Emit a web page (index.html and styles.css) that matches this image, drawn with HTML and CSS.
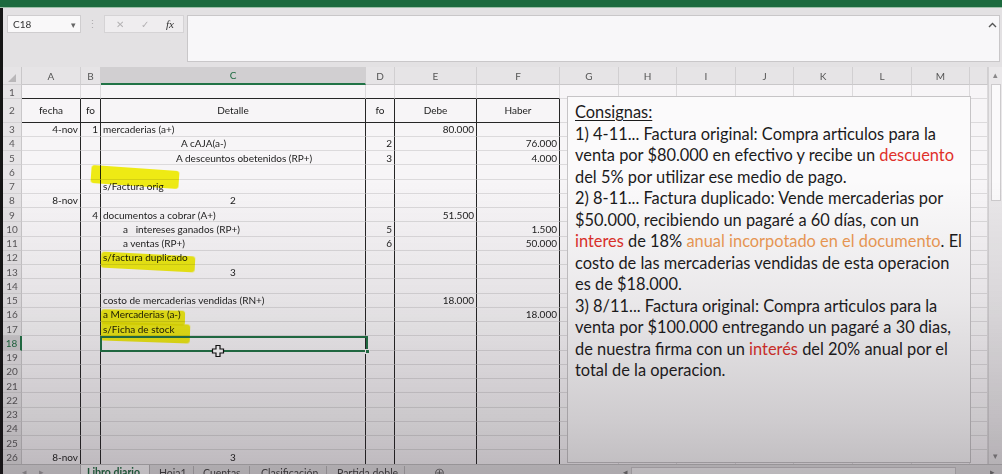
FILE: index.html
```html
<!DOCTYPE html>
<html lang="es">
<head>
<meta charset="utf-8">
<title>Libro diario</title>
<link rel="stylesheet" href="styles.css">
</head>
<body>
<div class="topbar"></div>
<div class="main">
  <div class="fbar">
    <div class="namebox"><span>C18</span><span class="dd">▾</span></div>
    <div class="grip">⋮</div>
    <div class="fbtns"><span class="x">✕</span><span class="ok">✓</span><span class="fx">fx</span></div>
    <div class="finput">
      <svg class="chev" width="9" height="6" viewBox="0 0 9 6"><path d="M1 5 L4.5 1.5 L8 5" fill="none" stroke="#555" stroke-width="1.4"/></svg>
    </div>
  </div>

  <div class="sheet">
    <div class="gridwrap">
      <div class="row hdr">
        <div class="corner"><svg width="8" height="8" viewBox="0 0 8 8"><path d="M8 0 L8 8 L0 8 Z" fill="#b9b7b9"/></svg></div>
        <div>A</div><div>B</div><div class="cur">C</div><div>D</div><div>E</div><div>F</div><div>G</div><div>H</div><div>I</div><div>J</div><div>K</div><div>L</div><div>M</div><div></div>
      </div>
      <div class="row r1"><div>1</div><div></div><div></div><div></div><div></div><div></div><div></div><div></div><div></div><div></div><div></div><div></div><div></div><div></div><div></div></div>
      <div class="row r2 t"><div>2</div><div class="ctr">fecha</div><div class="ctr">fo</div><div class="ctr">Detalle</div><div class="ctr">fo</div><div class="ctr">Debe</div><div class="ctr">Haber</div><div></div><div></div><div></div><div></div><div></div><div></div><div></div><div></div></div>
      <div class="row t"><div>3</div><div class="rt">4-nov</div><div class="rt">1</div><div>mercaderias (a+)</div><div></div><div class="rt">80.000</div><div></div><div></div><div></div><div></div><div></div><div></div><div></div><div></div><div></div></div>
      <div class="row t"><div>4</div><div></div><div></div><div class="in80">A cAJA(a-)</div><div class="rt">2</div><div></div><div class="rt">76.000</div><div></div><div></div><div></div><div></div><div></div><div></div><div></div><div></div></div>
      <div class="row t"><div>5</div><div></div><div></div><div class="in75">A desceuntos obetenidos (RP+)</div><div class="rt">3</div><div></div><div class="rt">4.000</div><div></div><div></div><div></div><div></div><div></div><div></div><div></div><div></div></div>
      <div class="row t"><div>6</div><div></div><div></div><div></div><div></div><div></div><div></div><div></div><div></div><div></div><div></div><div></div><div></div><div></div><div></div></div>
      <div class="row t"><div>7</div><div></div><div></div><div>s/Factura orig</div><div></div><div></div><div></div><div></div><div></div><div></div><div></div><div></div><div></div><div></div><div></div></div>
      <div class="row t"><div>8</div><div class="rt">8-nov</div><div></div><div class="ctr">2</div><div></div><div></div><div></div><div></div><div></div><div></div><div></div><div></div><div></div><div></div><div></div></div>
      <div class="row t"><div>9</div><div></div><div class="rt">4</div><div>documentos a cobrar (A+)</div><div></div><div class="rt">51.500</div><div></div><div></div><div></div><div></div><div></div><div></div><div></div><div></div><div></div></div>
      <div class="row t"><div>10</div><div></div><div></div><div class="in20">a   intereses ganados (RP+)</div><div class="rt">5</div><div></div><div class="rt">1.500</div><div></div><div></div><div></div><div></div><div></div><div></div><div></div><div></div></div>
      <div class="row t"><div>11</div><div></div><div></div><div class="in20">a ventas (RP+)</div><div class="rt">6</div><div></div><div class="rt">50.000</div><div></div><div></div><div></div><div></div><div></div><div></div><div></div><div></div></div>
      <div class="row t"><div>12</div><div></div><div></div><div>s/factura duplicado</div><div></div><div></div><div></div><div></div><div></div><div></div><div></div><div></div><div></div><div></div><div></div></div>
      <div class="row t"><div>13</div><div></div><div></div><div class="ctr">3</div><div></div><div></div><div></div><div></div><div></div><div></div><div></div><div></div><div></div><div></div><div></div></div>
      <div class="row t"><div>14</div><div></div><div></div><div></div><div></div><div></div><div></div><div></div><div></div><div></div><div></div><div></div><div></div><div></div><div></div></div>
      <div class="row t"><div>15</div><div></div><div></div><div>costo de mercaderias vendidas (RN+)</div><div></div><div class="rt">18.000</div><div></div><div></div><div></div><div></div><div></div><div></div><div></div><div></div><div></div></div>
      <div class="row t"><div>16</div><div></div><div></div><div>a Mercaderias (a-)</div><div></div><div></div><div class="rt">18.000</div><div></div><div></div><div></div><div></div><div></div><div></div><div></div><div></div></div>
      <div class="row t"><div>17</div><div></div><div></div><div>s/Ficha de stock</div><div></div><div></div><div></div><div></div><div></div><div></div><div></div><div></div><div></div><div></div><div></div></div>
      <div class="row t"><div class="cur">18</div><div></div><div></div><div></div><div></div><div></div><div></div><div></div><div></div><div></div><div></div><div></div><div></div><div></div><div></div></div>
      <div class="row t"><div>19</div><div></div><div></div><div></div><div></div><div></div><div></div><div></div><div></div><div></div><div></div><div></div><div></div><div></div><div></div></div>
      <div class="row t"><div>20</div><div></div><div></div><div></div><div></div><div></div><div></div><div></div><div></div><div></div><div></div><div></div><div></div><div></div><div></div></div>
      <div class="row t"><div>21</div><div></div><div></div><div></div><div></div><div></div><div></div><div></div><div></div><div></div><div></div><div></div><div></div><div></div><div></div></div>
      <div class="row t"><div>22</div><div></div><div></div><div></div><div></div><div></div><div></div><div></div><div></div><div></div><div></div><div></div><div></div><div></div><div></div></div>
      <div class="row t"><div>23</div><div></div><div></div><div></div><div></div><div></div><div></div><div></div><div></div><div></div><div></div><div></div><div></div><div></div><div></div></div>
      <div class="row t"><div>24</div><div></div><div></div><div></div><div></div><div></div><div></div><div></div><div></div><div></div><div></div><div></div><div></div><div></div><div></div></div>
      <div class="row t"><div>25</div><div></div><div></div><div></div><div></div><div></div><div></div><div></div><div></div><div></div><div></div><div></div><div></div><div></div><div></div></div>
      <div class="row t"><div>26</div><div class="rt">8-nov</div><div></div><div class="ctr">3</div><div></div><div></div><div></div><div></div><div></div><div></div><div></div><div></div><div></div><div></div><div></div></div>

      <div class="hl hl1"></div>
      <div class="hl hl2"></div>
      <div class="hl hl3a"></div>
      <div class="hl hl3b"></div>

      <div class="sel"><span class="handle"></span></div>
      <svg class="cursor" width="14" height="14" viewBox="0 0 14 14"><path d="M5 1.5h4v3.5h3.5v4h-3.5v3.5h-4v-3.5h-3.5v-4h3.5z" fill="#fff" stroke="#111" stroke-width="1.2"/></svg>

      <div class="textbox">
        <p class="title">Consignas:</p>
        <p>1) 4-11... Factura original: Compra articulos para la</p>
        <p>venta por $80.000 en efectivo y recibe un <span class="red">descuento</span></p>
        <p>del 5% por utilizar ese medio de pago.</p>
        <p>2) 8-11... Factura duplicado: Vende mercaderias por</p>
        <p>$50.000, recibiendo un pagaré a 60 días, con un</p>
        <p><span class="red">interes</span> de 18% <span class="orange">anual incorpotado en el documento</span>. El</p>
        <p>costo de las mercaderias vendidas de esta operacion</p>
        <p>es de $18.000.</p>
        <p>3) 8/11... Factura original: Compra articulos para la</p>
        <p>venta por $100.000 entregando un pagaré a 30 dias,</p>
        <p>de nuestra firma con un <span class="red">interés</span> del 20% anual por el</p>
        <p>total de la operacion.</p>
      </div>
    </div>
    <div class="vscroll">
      <span class="arr">▴</span>
      <div class="thumb"></div>
      <div class="track"></div>
      <span class="arr">▾</span>
    </div>
  </div>

  <div class="tabs">
    <div class="nav"><span>◂</span><span>▸</span></div>
    <div class="tab active">Libro diario</div>
    <div class="tab">Hoja1</div>
    <div class="tab">Cuentas</div>
    <div class="tab">Clasificación</div>
    <div class="tab">Partida doble</div>
    <div class="add">⊕</div>
    <div class="spacer"></div>
    <div class="hscroll">
      <span class="harr">◂</span>
      <div class="htrack"></div>
      <span class="harr">▸</span>
    </div>
  </div>
</div>
</body>
</html>
```
FILE: styles.css
```css
* { box-sizing: border-box; }

html, body { margin: 0; padding: 0; }

body {
  width: 1002px;
  height: 474px;
  overflow: hidden;
  position: relative;
  background: #e2e0e2;
  font-family: "Lato", "Open Sans", sans-serif;
  color: #1b1b1b;
}

body::after {
  content: "";
  position: absolute;
  inset: 0;
  pointer-events: none;
  background: linear-gradient(to bottom,
    rgba(30, 20, 30, 0) 0px,
    rgba(30, 20, 30, 0) 180px,
    rgba(30, 20, 30, 0.08) 300px,
    rgba(30, 20, 30, 0.2) 420px,
    rgba(30, 20, 30, 0.27) 474px);
}

.topbar {
  height: 8px;
  background: #1c6a3e;
  border-bottom: 1px solid #9dbfa8;
}

.main {
  border-left: 3px solid #151515;
}

/* formula bar */
.fbar {
  height: 59px;
  display: flex;
  align-items: flex-start;
  padding: 7px 2px 0 4px;
  background: #e3e1e3;
}

.namebox {
  width: 74px;
  height: 18px;
  background: #f9f8f9;
  border: 1px solid #cfcdcf;
  display: flex;
  align-items: center;
  justify-content: space-between;
  padding: 0 4px 0 5px;
  font-size: 10px;
  color: #333;
}

.namebox .dd { font-size: 9px; color: #666; }

.grip {
  width: 23px;
  height: 18px;
  text-align: center;
  font-size: 11px;
  line-height: 18px;
  color: #b0aeb0;
}

.fbtns {
  width: 80px;
  height: 18px;
  display: flex;
  align-items: center;
  background: #efedef;
  border: 1px solid #d5d3d5;
  font-size: 10px;
}

.fbtns span { display: block; text-align: center; }
.fbtns .x { width: 28px; padding-left: 2px; color: #b4b2b4; }
.fbtns .ok { width: 24px; color: #b4b2b4; }
.fbtns .fx { width: 26px; font-family: "Liberation Serif", serif; font-style: italic; font-size: 11px; color: #333; }

.finput {
  margin-left: 3px;
  flex: 1;
  height: 47px;
  background: #f8f7f9;
  border: 1px solid #c9c7c9;
  position: relative;
}

.finput .chev {
  position: absolute;
  right: 2px;
  top: 6px;
}

/* sheet */
.sheet {
  display: flex;
  height: 397px;
}

.gridwrap {
  width: 985px;
  position: relative;
  overflow: hidden;
  background: #f7f5f7;
}

.row {
  display: grid;
  grid-template-columns: 19px 59px 20px 265px 29px 82px 83px 59px 58px 59px 58px 59px 59px 58px 18px;
  height: 14.26px;
}

.row > div {
  display: flex;
  align-items: center;
  padding: 0 2px;
  border-right: 1px solid #dcdadc;
  border-bottom: 1px solid #dcdadc;
  font-size: 10px;
  white-space: pre;
  color: #1b1b1b;
  overflow: visible;
}

.row > div:first-child {
  justify-content: center;
  background: #e6e4e6;
  color: #5a585a;
  border-right-color: #c9c7c9;
  border-bottom-color: #d3d1d3;
}

.row > div:first-child.cur {
  background: #d1cfd1;
  color: #1e6b41;
  border-right: 2px solid #217346;
}

.hdr { height: 18px; }

.hdr > div {
  justify-content: center;
  background: #e6e4e6;
  color: #555;
  border-right-color: #d1cfd1;
  border-bottom-color: #c9c7c9;
}

.hdr > .cur {
  background: #d1cfd1;
  color: #1e6b41;
  border-bottom: 2px solid #217346;
}

.hdr > .corner {
  align-items: flex-end;
  justify-content: flex-end;
  padding: 0 1px 2px 0;
}

.r1 { height: 14px; }
.r2 { height: 23.5px; }

.row > .rt { justify-content: flex-end; }
.row > .ctr { justify-content: center; }
.row > .in80 { padding-left: 80px; }
.row > .in75 { padding-left: 75px; }
.row > .in20 { padding-left: 22px; }

/* dark table borders */
.t > div:nth-child(n+2):nth-child(-n+7) { border-right-color: #262626; }
.r1 > div:nth-child(n+2):nth-child(-n+7),
.r2 > div:nth-child(n+2):nth-child(-n+7) { border-bottom-color: #262626; }

/* highlighter strokes */
.hl {
  position: absolute;
  background: rgba(245, 243, 0, 0.92);
  mix-blend-mode: multiply;
  border-radius: 3px;
  filter: blur(0.6px);
}

.hl1 { left: 88px; top: 101px; width: 88px; height: 18px; transform: rotate(4deg); }
.hl2 { left: 98px; top: 187px; width: 94px; height: 16px; transform: rotate(3deg); }
.hl3a { left: 98px; top: 243px; width: 84px; height: 15px; transform: rotate(1deg); }
.hl3b { left: 98px; top: 256px; width: 89px; height: 19px; transform: rotate(2deg); }

/* selection */
.sel {
  position: absolute;
  left: 97px;
  top: 269px;
  width: 268px;
  height: 16px;
  border: 2px solid #217346;
}

.sel .handle {
  position: absolute;
  right: -4px;
  bottom: -4px;
  width: 5px;
  height: 5px;
  background: #217346;
  border: 1px solid #f7f5f7;
}

.cursor {
  position: absolute;
  left: 208px;
  top: 277px;
}

/* text box */
.textbox {
  position: absolute;
  left: 564px;
  top: 29px;
  width: 404px;
  height: 367px;
  background: #fbfafb;
  border: 1px solid #c6c4c6;
  padding: 4px 0 0 7px;
  font-family: "Lato", "Open Sans", sans-serif;
  font-size: 16.4px;
  line-height: 21.5px;
  color: #1b1b1b;
}

.textbox p { margin: 0; white-space: nowrap; }
.textbox .title { text-decoration: underline; text-underline-offset: 2px; }
.textbox .red { color: #e0302a; }
.textbox .orange { color: #ee9a55; }

/* vertical scroll bar */
.vscroll {
  width: 14px;
  background: #eae8ea;
  border-left: 1px solid #d3d1d3;
  display: flex;
  flex-direction: column;
  align-items: center;
  padding: 1px 0;
}

.vscroll .arr {
  font-size: 9px;
  line-height: 14px;
  height: 14px;
  color: #8a888a;
}

.vscroll .thumb {
  width: 10px;
  height: 117px;
  background: #fbfafb;
  border: 1px solid #cdcbcd;
  margin-top: 2px;
}

.vscroll .track { flex: 1; }

/* sheet tabs */
.tabs {
  height: 10px;
  display: flex;
  align-items: flex-start;
  background: #e2e0e2;
  font-size: 10.5px;
  line-height: 14px;
  color: #444;
  overflow: hidden;
  border-top: 1px solid #c3c1c3;
  white-space: nowrap;
}

.tabs .nav {
  width: 77px;
  display: flex;
  gap: 12px;
  padding-left: 19px;
  color: #a3a1a3;
  font-size: 9px;
}

.tabs .tab {
  height: 14px;
  padding: 0 10px;
  border-right: 1px solid #b8b6b8;
  margin-top: 1px;
  white-space: nowrap;
  flex: none;
}

.tabs .tab.active {
  width: 70px;
  background: #fbfafb;
  color: #1e6b41;
  font-weight: 700;
  text-decoration: underline;
  border-left: 1px solid #b8b6b8;
  padding: 0 6px;
  margin-top: 0;
}

.tabs .tab:nth-child(3) { width: 44px; padding-left: 9px; }
.tabs .tab:nth-child(4) { width: 56px; padding-left: 9px; }
.tabs .tab:nth-child(5) { width: 77px; padding-left: 11px; }
.tabs .tab:nth-child(6) { width: 78px; padding: 0 0 0 10px; }

.tabs .add {
  width: 40px;
  text-align: right;
  font-size: 13px;
  line-height: 14px;
  color: #666;
  flex: none;
}

.tabs .spacer { flex: 1; }

.hscroll {
  width: 383px;
  display: flex;
  align-items: flex-start;
  color: #777;
  font-size: 9px;
  flex: none;
}

.hscroll .harr { width: 12px; text-align: center; }

.hscroll .htrack {
  width: 325px;
  height: 10px;
  margin-top: 2px;
  background: #f4f3f4;
  border: 1px solid #c9c7c9;
  margin-right: 30px;
}
```
